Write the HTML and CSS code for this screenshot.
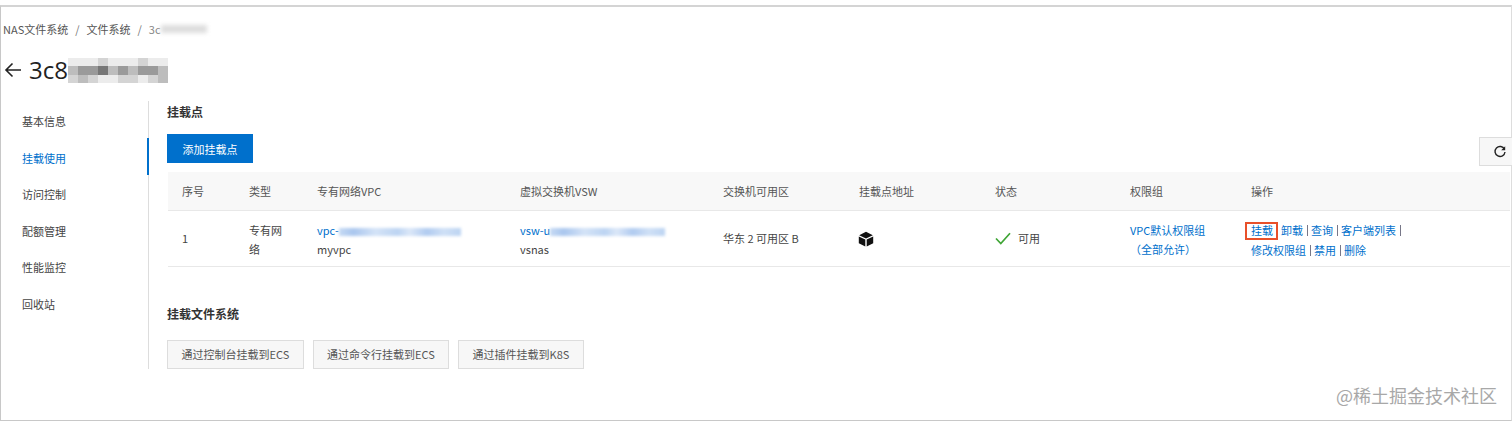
FILE: index.html
```html
<!DOCTYPE html>
<html lang="zh-CN">
<head>
<meta charset="utf-8">
<title>挂载点</title>
<link rel="stylesheet" href="styles.css">
</head>
<body>
<div class="frame">
  <nav class="crumbs">
    <span>NAS文件系统</span><span class="sep">/</span><span>文件系统</span><span class="sep">/</span><span class="crumb-last">3c<i class="blur-gray"></i></span>
  </nav>
  <header class="head">
    <svg class="back" width="18" height="16" viewBox="0 0 18 16"><path d="M17 8H2M8.500 1.500 2 8l6.500 6.500" fill="none" stroke="#222" stroke-width="1.600"/></svg>
    <h1>3c8</h1>
    <svg class="mosaic" width="100" height="25" viewBox="0 0 10 3" preserveAspectRatio="none" shape-rendering="crispEdges">
      <g fill="#ececec"><rect x="0" y="0" width="3" height="1"/><rect x="4" y="0" width="3" height="1"/><rect x="8" y="0" width="2" height="1"/><rect x="3" y="2" width="2" height="1"/><rect x="7" y="2" width="1" height="1"/></g>
      <g fill="#d4d4d4"><rect x="3" y="0" width="1" height="1"/><rect x="7" y="0" width="1" height="1"/><rect x="0" y="2" width="1" height="1"/><rect x="2" y="2" width="1" height="1"/><rect x="5" y="2" width="2" height="1"/><rect x="8" y="2" width="1" height="1"/></g>
      <g fill="#bdbdbd"><rect x="0" y="1" width="1" height="1"/><rect x="4" y="1" width="1" height="1"/><rect x="6" y="1" width="1" height="1"/><rect x="9" y="1" width="1" height="1"/><rect x="1" y="2" width="1" height="1"/><rect x="9" y="2" width="1" height="1"/></g>
      <g fill="#9a9a9a"><rect x="1" y="1" width="2" height="1"/><rect x="5" y="1" width="1" height="1"/><rect x="7" y="1" width="2" height="1"/></g>
      <g fill="#777"><rect x="3" y="1" width="1" height="1"/></g>
    </svg>
  </header>
  <div class="body">
    <aside class="side">
      <a>基本信息</a>
      <a class="active">挂载使用</a>
      <a>访问控制</a>
      <a>配额管理</a>
      <a>性能监控</a>
      <a>回收站</a>
    </aside>
    <main class="main">
      <h2>挂载点</h2>
      <div class="toolbar">
        <button class="primary">添加挂载点</button>
        <button class="refresh" aria-label="刷新">
          <svg width="14" height="14" viewBox="0 0 14 14"><path d="M11.500 4.200A5 5 0 1 0 12 7" fill="none" stroke="#222" stroke-width="1.400"/><path d="M12.200 1.200v4h-4z" fill="#222"/></svg>
        </button>
      </div>
      <table class="grid">
        <colgroup>
          <col class="c1"><col class="c2"><col class="c3"><col class="c3"><col class="c4"><col class="c4"><col class="c6"><col class="c5"><col>
        </colgroup>
        <thead>
          <tr><th>序号</th><th>类型</th><th>专有网络VPC</th><th>虚拟交换机VSW</th><th>交换机可用区</th><th>挂载点地址</th><th>状态</th><th>权限组</th><th>操作</th></tr>
        </thead>
        <tbody>
          <tr>
            <td class="num">1</td>
            <td class="two">专有网<br>络</td>
            <td class="two"><a>vpc-<i class="blur-blue b-vpc"></i></a><br>myvpc</td>
            <td class="two"><a>vsw-u<i class="blur-blue b-vsw"></i></a><br>vsnas</td>
            <td>华东 2 可用区 B</td>
            <td>
              <svg class="cube" width="16" height="16" viewBox="0 0 16 16"><path d="M8 .8 1.200 4.200 8 7.400l6.800-3.200z" fill="#111"/><path d="M.8 5.400 7.300 8.500v6.900L.8 12.200zM15.200 5.400 8.700 8.500v6.900l6.500-3.200z" fill="#111"/></svg>
            </td>
            <td>
              <span class="status"><svg width="16" height="13" viewBox="0 0 16 13"><path d="M1 6.500 5.800 11.500 15 1.200" fill="none" stroke="#3fa535" stroke-width="1.700"/></svg>可用</span>
            </td>
            <td class="two"><a>VPC默认权限组</a><br><a>（全部允许）</a></td>
            <td class="ops">
              <a class="mark">挂载</a><a>卸载</a><b></b><a>查询</a><b></b><a>客户端列表</a><b></b><br><a>修改权限组</a><b></b><a>禁用</a><b></b><a>删除</a>
            </td>
          </tr>
        </tbody>
      </table>
      <h2 class="second">挂载文件系统</h2>
      <div class="actions">
        <button class="w1">通过控制台挂载到ECS</button>
        <button class="w2">通过命令行挂载到ECS</button>
        <button class="w3">通过插件挂载到K8S</button>
      </div>
    </main>
  </div>
  <div class="watermark">@稀土掘金技术社区</div>
</div>
</body>
</html>
```
FILE: styles.css
```css
* { box-sizing: border-box; }
html, body { margin: 0; padding: 0; background: #fff; }
body {
  width: 1512px;
  height: 421px;
  overflow: hidden;
  padding-top: 5px;
  font-family: "Noto Sans CJK SC", "Open Sans", sans-serif;
  font-size: 11px;
  color: #444;
}
.frame {
  position: relative;
  height: 416px;
  border: 1px solid #c8c8c8;
  border-top: 2px solid #d4d4d4;
  border-right-color: #ddd;
}
.crumbs {
  display: flex;
  align-items: center;
  height: 16px;
  margin-top: 14px;
  padding-left: 2px;
  color: #555;
  line-height: 16px;
}
.sep { margin: 0 7px; color: #777; }
.crumb-last { display: flex; align-items: center; color: #888; }
.blur-gray {
  display: inline-block;
  width: 46px;
  height: 8px;
  background: #ddd;
  filter: blur(2px);
}
.head {
  display: flex;
  align-items: center;
  height: 30px;
  margin-top: 18px;
  padding-left: 3px;
}
.back { flex: none; }
.head h1 {
  margin: 0 0 0 7px;
  font-family: "Open Sans", sans-serif;
  font-size: 24px;
  font-weight: 400;
  color: #222;
  line-height: 30px;
}
.mosaic { flex: none; filter: blur(.6px); }
.body {
  display: flex;
  align-items: stretch;
  margin-top: 16px;
  height: 268px;
}
.side {
  flex: none;
  width: 148px;
  border-right: 1px solid #ddd;
  padding-top: 2px;
  height: 268px;
}
.side a {
  display: block;
  height: 36.500px;
  line-height: 36.500px;
  padding-left: 21px;
  color: #444;
}
.side a.active {
  position: relative;
  color: #0070cc;
}
.side a.active::after {
  content: "";
  position: absolute;
  right: -1px;
  top: -2px;
  width: 2px;
  height: 37px;
  background: #0070cc;
}
.main { flex: 1; min-width: 0; padding-left: 18px; }
h2 {
  margin: 0;
  font-size: 12px;
  font-weight: 700;
  color: #333;
  line-height: 20px;
  height: 20px;
  margin-top: 1px;
}
.toolbar {
  display: flex;
  justify-content: space-between;
  align-items: flex-start;
  margin-top: 12px;
}
button {
  font: inherit;
  margin: 0;
  cursor: pointer;
}
.primary {
  width: 86px;
  height: 29px;
  border: 0;
  background: #0070cc;
  color: #fff;
}
.refresh {
  display: flex;
  align-items: center;
  justify-content: center;
  width: 33px;
  height: 29px;
  margin-top: 3px;
  margin-right: -1px;
  border: 1px solid #ddd;
  border-right: 0;
  background: #f7f7f7;
  padding: 0 0 0 8px;
}
.grid {
  width: 1342px;
  margin-top: 6px;
  margin-left: 1px;
  table-layout: fixed;
  border-collapse: collapse;
}
.c1 { width: 67px; }
.c2 { width: 68px; }
.c3 { width: 203px; }
.c4 { width: 136px; }
.c5 { width: 121px; }
.c6 { width: 135px; }
.grid th {
  height: 38px;
  padding: 0 0 0 14px;
  background: #f8f8f8;
  border-bottom: 1px solid #e8e8e8;
  font-weight: 400;
  text-align: left;
  color: #555;
}
.grid td {
  height: 56px;
  padding: 0 0 0 14px;
  border-bottom: 1px solid #e8e8e8;
  line-height: 20px;
  color: #444;
  vertical-align: middle;
}
.grid td.two { line-height: 19px; padding-top: 3px; }
.grid td a { color: #0070cc; }
.num { color: #5a5a30; }
.blur-blue {
  display: inline-block;
  height: 8px;
  vertical-align: -1px;
  background: linear-gradient(90deg, #c6daf4, #a9c6ee 12%, #d4e3f7 30%, #bcd4f2 48%, #dbe7f8 58%, #b0cbf0 72%, #cfe0f6 86%, #bcd4f2);
  filter: blur(1.500px);
}
.b-vpc { width: 122px; }
.b-vsw { width: 115px; }
.cube { display: block; margin: 1px 0 0 -1px; }
.status { display: flex; align-items: center; gap: 7px; color: #444; font-size: 11px; }
.grid td.ops { white-space: nowrap; font-size: 11px; padding-top: 4px; }
.ops b {
  display: inline-block;
  width: 1px;
  height: 11px;
  margin: 0 3.500px;
  background: #778;
  vertical-align: -1px;
}
.ops .mark {
  position: relative;
  margin-right: 8px;
}
.ops .mark::after {
  content: "";
  position: absolute;
  left: -6px;
  right: -5px;
  top: 0;
  bottom: -2px;
  border: 2px solid #e8502a;
}
.second { margin-top: 37px; }
.actions {
  display: flex;
  gap: 9px;
  margin-top: 16px;
}
.actions button {
  height: 29px;
  border: 1px solid #ddd;
  background: #f7f7f7;
  color: #555;
  padding: 0;
}
.w1 { width: 137px; }
.w2 { width: 136px; }
.w3 { width: 126px; }
.watermark {
  position: absolute;
  right: 14px;
  bottom: 13px;
  font-size: 18px;
  line-height: 24px;
  color: #a8a8a8;
}
```
